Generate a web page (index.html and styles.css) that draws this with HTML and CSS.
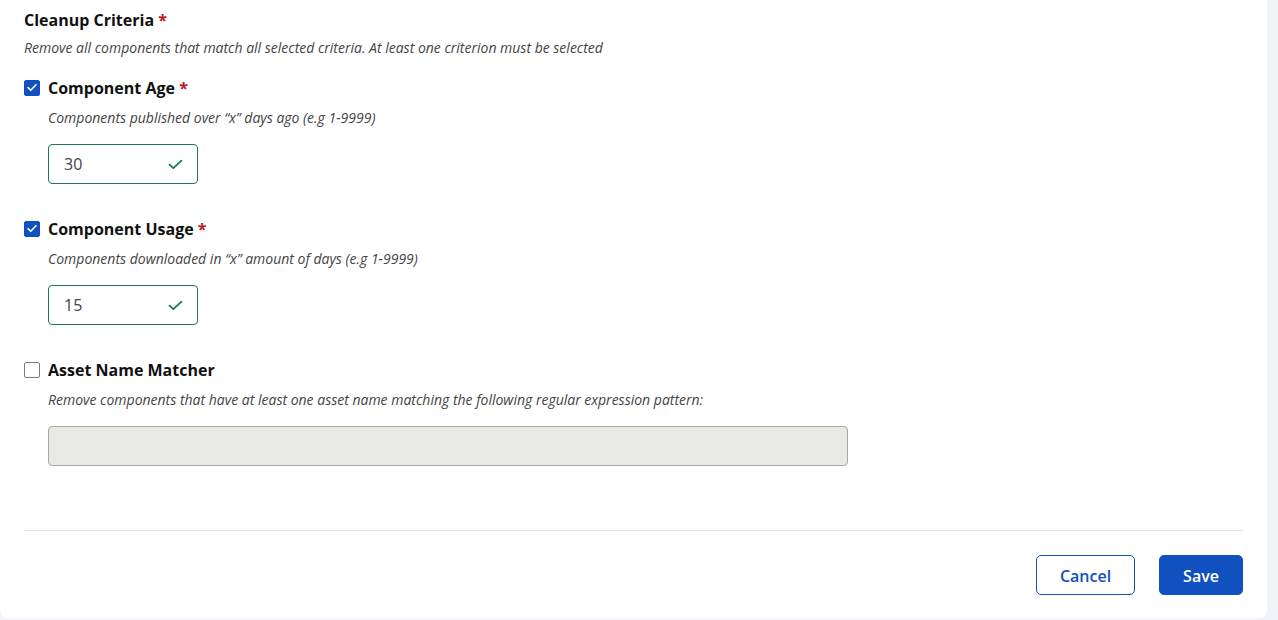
FILE: index.html
```html
<!DOCTYPE html>
<html lang="en">
<head>
<meta charset="utf-8">
<title>Cleanup Criteria</title>
<link rel="stylesheet" href="styles.css">
</head>
<body>
<div class="card">
  <div class="section-title">Cleanup Criteria <span class="req">*</span></div>
  <div class="section-desc">Remove all components that match all selected criteria. At least one criterion must be selected</div>

  <div class="criterion">
    <label class="crit-label">
      <span class="cb checked"><svg viewBox="0 0 16 16" width="16" height="16"><path d="M3.5 8.2 L6.6 11.2 L12.6 4.8" fill="none" stroke="#fff" stroke-width="1.8" stroke-linecap="round" stroke-linejoin="round"/></svg></span>
      <span class="crit-name">Component Age <span class="req">*</span></span>
    </label>
    <div class="crit-desc">Components published over “x” days ago (e.g 1-9999)</div>
    <div class="num-input valid">
      <span class="val">30</span>
      <svg class="ok" viewBox="0 0 16 12" width="16" height="12"><path d="M1.5 6.2 L5.6 10 L14.5 1.8" fill="none" stroke="#1d7a4d" stroke-width="2" stroke-linecap="round" stroke-linejoin="round"/></svg>
    </div>
  </div>

  <div class="criterion">
    <label class="crit-label">
      <span class="cb checked"><svg viewBox="0 0 16 16" width="16" height="16"><path d="M3.5 8.2 L6.6 11.2 L12.6 4.8" fill="none" stroke="#fff" stroke-width="1.8" stroke-linecap="round" stroke-linejoin="round"/></svg></span>
      <span class="crit-name">Component Usage <span class="req">*</span></span>
    </label>
    <div class="crit-desc">Components downloaded in “x” amount of days (e.g 1-9999)</div>
    <div class="num-input valid">
      <span class="val">15</span>
      <svg class="ok" viewBox="0 0 16 12" width="16" height="12"><path d="M1.5 6.2 L5.6 10 L14.5 1.8" fill="none" stroke="#1d7a4d" stroke-width="2" stroke-linecap="round" stroke-linejoin="round"/></svg>
    </div>
  </div>

  <div class="criterion">
    <label class="crit-label">
      <span class="cb"></span>
      <span class="crit-name">Asset Name Matcher</span>
    </label>
    <div class="crit-desc">Remove components that have at least one asset name matching the following regular expression pattern:</div>
    <div class="text-input disabled"></div>
  </div>

  <div class="footer">
    <button class="btn btn-secondary" type="button">Cancel</button>
    <button class="btn btn-primary" type="button">Save</button>
  </div>
</div>
</body>
</html>
```
FILE: styles.css
```css
html, body {
  margin: 0;
  padding: 0;
}
body {
  background: #f2f3f8;
  font-family: "Open Sans", "Liberation Sans", sans-serif;
  color: #1b1b1b;
  height: 620px;
  overflow: hidden;
}
.card {
  width: 1267px;
  height: 618px;
  box-sizing: border-box;
  background: #ffffff;
  border-radius: 0 0 8px 8px;
  padding: 10px 24px 0 24px;
}
.section-title {
  font-size: 16px;
  font-weight: 700;
  line-height: 20px;
  color: #111;
}
.req {
  color: #c0151c;
  font-weight: 700;
}
.section-desc {
  margin-top: 9px;
  font-size: 14px;
  font-style: italic;
  line-height: 18px;
  color: #444;
}
.criterion {
  margin-top: 21px;
}
.criterion + .criterion {
  margin-top: 35px;
}
.crit-label {
  display: flex;
  align-items: center;
  gap: 8px;
  height: 20px;
}
.cb {
  width: 16px;
  height: 16px;
  box-sizing: border-box;
  border: 1px solid #7a7a7a;
  border-radius: 2px;
  background: #fff;
  display: flex;
  align-items: center;
  justify-content: center;
  flex: none;
  margin-top: -1px;
}
.cb.checked {
  background: #1150bf;
  border-color: #1150bf;
}
.cb svg {
  width: 15px;
  height: 15px;
}
.crit-name {
  font-size: 16px;
  font-weight: 700;
  line-height: 20px;
  color: #111;
}
.crit-desc {
  margin-top: 11px;
  margin-left: 24px;
  font-size: 14px;
  font-style: italic;
  line-height: 18px;
  color: #444;
}
.num-input {
  margin-top: 17px;
  margin-left: 24px;
  width: 150px;
  height: 40px;
  box-sizing: border-box;
  border: 1px solid #1d7a4d;
  border-radius: 4px;
  display: flex;
  align-items: center;
  justify-content: space-between;
  padding: 0 14px 0 15px;
}
.num-input .val {
  font-size: 16px;
  color: #444;
}
.num-input .ok {
  width: 15px;
  height: 11px;
}
.text-input {
  margin-top: 17px;
  margin-left: 24px;
  width: 800px;
  height: 40px;
  box-sizing: border-box;
  border: 1px solid #a9aaa6;
  border-radius: 4px;
  background: #e8e8e4;
}
.footer {
  margin-top: 64px;
  border-top: 1px solid #dfe1ec;
  padding-top: 24px;
  display: flex;
  justify-content: flex-end;
  gap: 24px;
}
.btn {
  height: 40px;
  box-sizing: border-box;
  border-radius: 5px;
  padding-top: 2px;
  font-family: "Open Sans", "Liberation Sans", sans-serif;
  font-size: 16px;
  font-weight: 600;
  cursor: pointer;
}
.btn-secondary {
  width: 99px;
  background: #fff;
  border: 1px solid #1150bf;
  color: #1150bf;
}
.btn-primary {
  width: 84px;
  background: #1150bf;
  border: 1px solid #1150bf;
  color: #fff;
}
```
